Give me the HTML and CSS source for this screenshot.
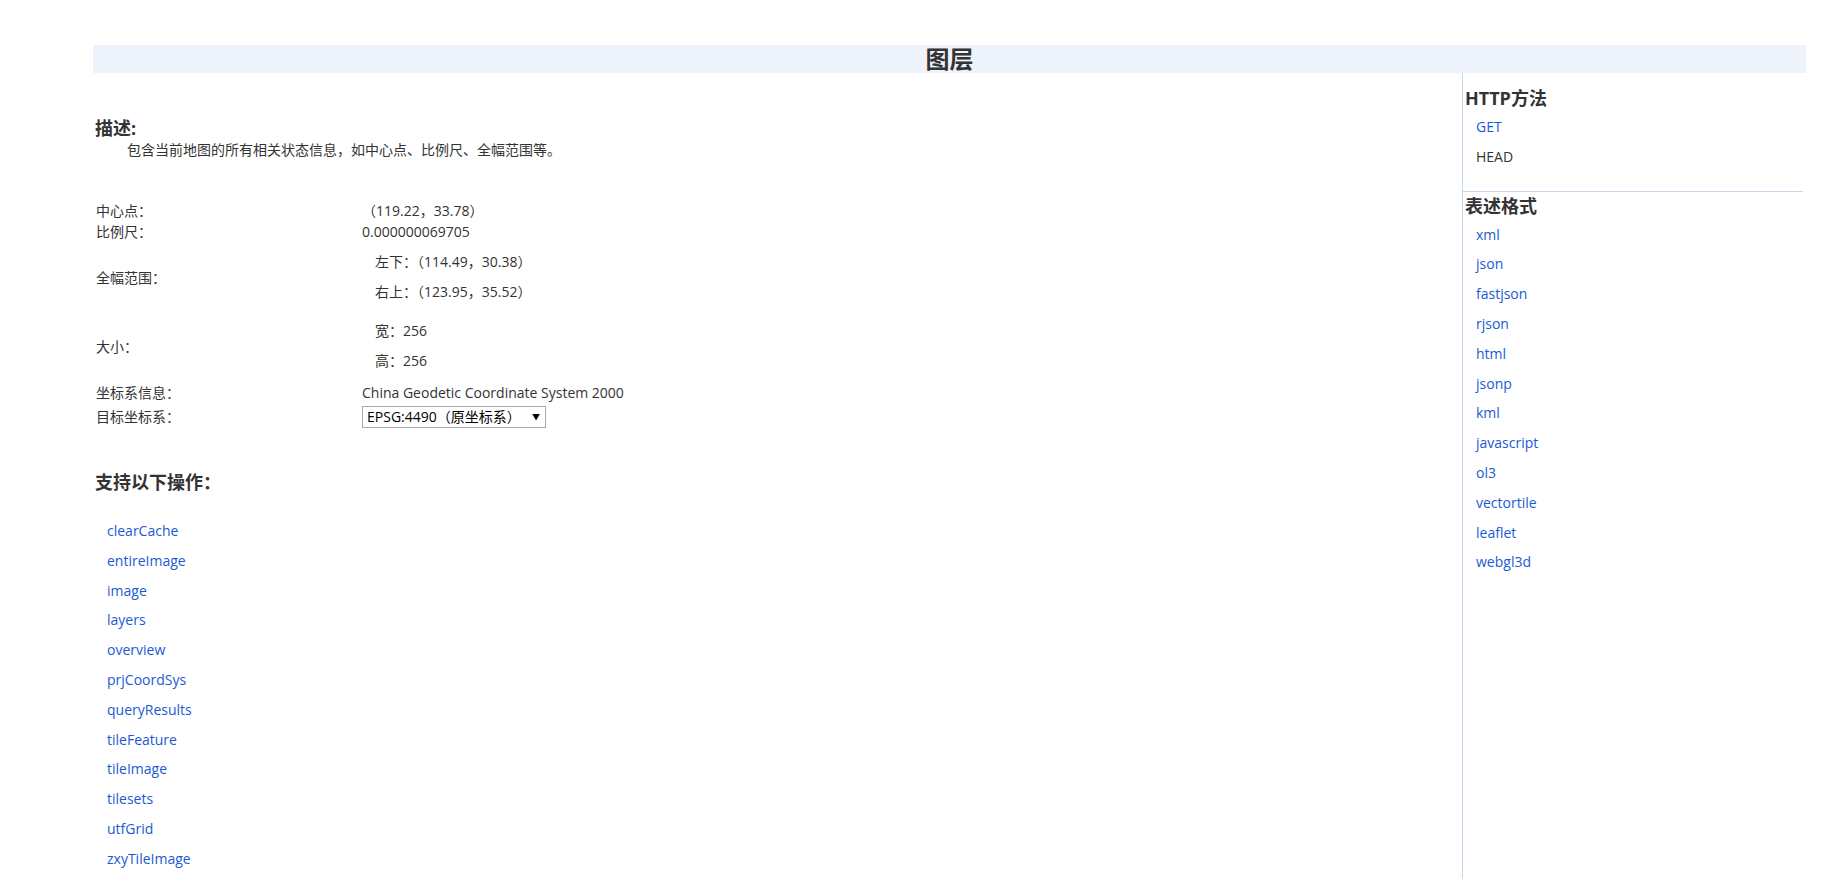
FILE: index.html
```html
<!DOCTYPE html>
<html lang="zh-CN">
<head>
<meta charset="utf-8">
<title>图层</title>
<link rel="stylesheet" href="styles.css">
</head>
<body>
<div class="page">
  <div class="title-bar"><h1 class="title">图层</h1></div>
  <div class="body">
    <div class="main">
      <h3 class="section-title desc-title">描述:</h3>
      <p class="desc">包含当前地图的所有相关状态信息，如中心点、比例尺、全幅范围等。</p>
      <div class="props">
        <div class="row">
          <div class="label">中心点：</div>
          <div class="value">（119.22，33.78）</div>
        </div>
        <div class="row">
          <div class="label">比例尺：</div>
          <div class="value">0.000000069705</div>
        </div>
        <div class="row row-nested">
          <div class="label">全幅范围：</div>
          <ul class="sub">
            <li>左下：（114.49，30.38）</li>
            <li>右上：（123.95，35.52）</li>
          </ul>
        </div>
        <div class="row row-nested">
          <div class="label">大小：</div>
          <ul class="sub">
            <li>宽：256</li>
            <li>高：256</li>
          </ul>
        </div>
        <div class="row row-tall">
          <div class="label">坐标系信息：</div>
          <div class="value">China Geodetic Coordinate System 2000</div>
        </div>
        <div class="row row-tall">
          <div class="label">目标坐标系：</div>
          <div class="value">
            <span class="select-wrap">
              <select class="select">
                <option>EPSG:4490（原坐标系）</option>
              </select>
            </span>
          </div>
        </div>
      </div>
      <h3 class="section-title ops-title">支持以下操作：</h3>
      <ul class="ops">
        <li><a href="#">clearCache</a></li>
        <li><a href="#">entireImage</a></li>
        <li><a href="#">image</a></li>
        <li><a href="#">layers</a></li>
        <li><a href="#">overview</a></li>
        <li><a href="#">prjCoordSys</a></li>
        <li><a href="#">queryResults</a></li>
        <li><a href="#">tileFeature</a></li>
        <li><a href="#">tileImage</a></li>
        <li><a href="#">tilesets</a></li>
        <li><a href="#">utfGrid</a></li>
        <li><a href="#">zxyTileImage</a></li>
      </ul>
    </div>
    <div class="side">
      <div class="side-section side-methods">
        <h3 class="side-title">HTTP方法</h3>
        <ul class="side-list">
          <li><a href="#">GET</a></li>
          <li><span class="plain">HEAD</span></li>
        </ul>
      </div>
      <div class="side-section side-formats">
        <h3 class="side-title">表述格式</h3>
        <ul class="side-list">
          <li><a href="#">xml</a></li>
          <li><a href="#">json</a></li>
          <li><a href="#">fastjson</a></li>
          <li><a href="#">rjson</a></li>
          <li><a href="#">html</a></li>
          <li><a href="#">jsonp</a></li>
          <li><a href="#">kml</a></li>
          <li><a href="#">javascript</a></li>
          <li><a href="#">ol3</a></li>
          <li><a href="#">vectortile</a></li>
          <li><a href="#">leaflet</a></li>
          <li><a href="#">webgl3d</a></li>
        </ul>
      </div>
    </div>
  </div>
</div>
</body>
</html>
```

FILE: styles.css
```css
html, body {
  margin: 0;
  padding: 0;
  background: #ffffff;
}

body {
  font-family: "Open Sans", "Noto Sans CJK SC", sans-serif;
  font-size: 14px;
  color: #333333;
}

ul {
  list-style: none;
  margin: 0;
  padding: 0;
}

a {
  color: #1a5ad3;
  text-decoration: none;
}

.page {
  margin: 45px 30px 0 93px;
}

.title-bar {
  background: #eef3fb;
  height: 28px;
}

.title {
  margin: 0;
  font-size: 24px;
  line-height: 28px;
  font-weight: bold;
  text-align: center;
  color: #333333;
}

.body {
  display: flex;
  align-items: stretch;
}

.main {
  flex: 1;
  padding: 0 0 5px 2px;
}

.section-title {
  margin: 0;
  font-size: 18px;
  line-height: 22px;
  font-weight: bold;
  color: #333333;
}

.desc-title {
  margin-top: 44px;
}

.desc {
  margin: 0;
  padding-left: 32px;
  line-height: 21px;
}

.props {
  margin-top: 40px;
}

.row {
  display: flex;
  align-items: center;
  line-height: 21px;
}

.row-nested {
  padding: 5px 0 4px;
}

.row-tall {
  min-height: 24px;
}

.label {
  width: 266px;
  flex: none;
  padding-left: 1px;
}

.sub li {
  line-height: 30px;
  padding-left: 13px;
}

.select-wrap {
  position: relative;
  display: inline-block;
}

.select {
  appearance: none;
  -webkit-appearance: none;
  width: 184px;
  height: 22px;
  margin: 0;
  padding: 0 0 0 4px;
  border: 1px solid #a9a9a9;
  border-radius: 0;
  background: #ffffff;
  font-family: "Open Sans", "Noto Sans CJK SC", sans-serif;
  font-size: 14px;
  color: #000000;
  vertical-align: middle;
}

.select-wrap::after {
  content: "▼";
  position: absolute;
  right: 6px;
  top: 50%;
  transform: translateY(-50%);
  font-size: 8px;
  color: #000000;
  pointer-events: none;
}

.ops-title {
  margin-top: 43px;
}

.ops {
  margin-top: 23px;
}

.ops li {
  line-height: 29.8px;
  padding-left: 12px;
}

.side {
  width: 343px;
  flex: none;
  border-left: 1px solid #c5d6ef;
}

.side-section {
  padding-left: 2px;
}

.side-methods {
  padding-top: 14px;
  padding-bottom: 19px;
  border-bottom: 1px solid #c5d6ef;
  margin-right: 3px;
}

.side-formats {
  padding-top: 3px;
}

.side-title {
  margin: 0 0 3px;
  font-size: 18px;
  line-height: 22px;
  font-weight: bold;
  color: #333333;
}

.side-list li {
  line-height: 29.8px;
  padding-left: 11px;
}

.plain {
  color: #333333;
}
```
